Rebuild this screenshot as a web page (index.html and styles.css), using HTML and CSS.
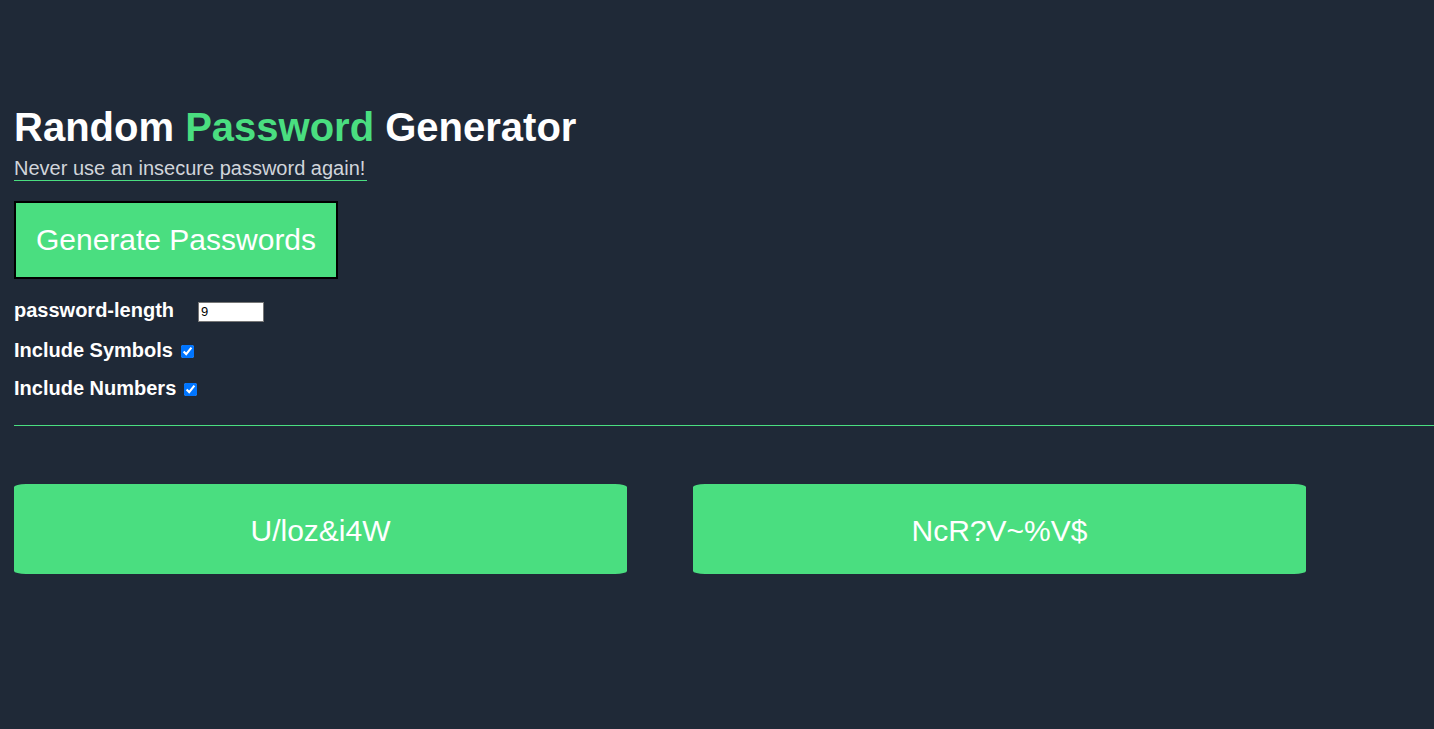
FILE: index.html
```html
<!DOCTYPE html>
<html lang="en">
<head>
<meta charset="utf-8">
<title>Random Password Generator</title>
<link rel="stylesheet" href="styles.css">
</head>
<body>
<main class="page">
  <h1 class="title">Random <span class="accent">Password</span> Generator</h1>
  <p class="subtitle">Never use an insecure password again!</p>
  <button class="generate" type="button">Generate Passwords</button>
  <div class="row row-length">
    <label class="label label-length" for="len">password-length</label>
    <input class="length-input" id="len" type="number" value="9">
  </div>
  <div class="row row-symbols">
    <label class="label" for="sym">Include Symbols</label>
    <input class="check" id="sym" type="checkbox" checked>
  </div>
  <div class="row row-numbers">
    <label class="label" for="num">Include Numbers</label>
    <input class="check" id="num" type="checkbox" checked>
  </div>
  <div class="divider"></div>
  <div class="results">
    <div class="result">U/loz&amp;i4W</div>
    <div class="result">NcR?V~%V$</div>
  </div>
</main>
</body>
</html>
```

FILE: styles.css
```css
html, body {
  margin: 0;
  padding: 0;
  background: #1f2937;
  height: 100%;
}
body {
  font-family: "Liberation Sans", Arial, sans-serif;
  color: #ffffff;
  overflow: hidden;
}
.page {
  padding: 104px 0 0 14px;
}
.title {
  margin: 0;
  font-size: 40px;
  font-weight: 700;
  line-height: 46px;
  color: #ffffff;
}
.accent {
  color: #4ade80;
}
.subtitle {
  display: inline-block;
  margin: 7px 0 0 0;
  padding-right: 2px;
  font-size: 20px;
  line-height: 23px;
  color: #d1d5db;
  border-bottom: 1px solid #4ade80;
}
.generate {
  display: block;
  margin: 20px 0 0 0;
  padding: 0;
  height: 78px;
  width: 324px;
  box-sizing: border-box;
  background: #4ade80;
  border: 2px solid #000000;
  color: #ffffff;
  font-family: "Liberation Sans", Arial, sans-serif;
  font-size: 30px;
  white-space: nowrap;
  cursor: pointer;
}
.row {
  display: flex;
  align-items: center;
  height: 23px;
}
.row-length {
  margin-top: 20px;
}
.row-symbols {
  margin-top: 17px;
}
.row-numbers {
  margin-top: 15px;
}
.label {
  font-size: 20px;
  font-weight: 700;
  line-height: 23px;
}
.label-length {
  margin-right: 24px;
}
.length-input {
  width: 66px;
  height: 20px;
  box-sizing: border-box;
  margin: 2px 0 0 0;
  padding: 1px 2px;
  border: 1px solid #767676;
  background: #ffffff;
  font-family: "Liberation Sans", Arial, sans-serif;
  font-size: 13px;
  color: #000000;
  -moz-appearance: textfield;
}
.length-input::-webkit-inner-spin-button,
.length-input::-webkit-outer-spin-button {
  -webkit-appearance: none;
  margin: 0;
}
.check {
  width: 13px;
  height: 13px;
  margin: 1px 0 0 8px;
  accent-color: #0075ff;
}
.divider {
  margin-top: 25px;
  height: 1px;
  background: #4ade80;
}
.results {
  display: flex;
  gap: 66px;
  margin-top: 58px;
}
.result {
  width: 613px;
  height: 90px;
  box-sizing: border-box;
  padding-top: 3px;
  display: flex;
  align-items: center;
  justify-content: center;
  background: #4ade80;
  border-radius: 12px / 3px;
  font-size: 30px;
  color: #ffffff;
}
```
